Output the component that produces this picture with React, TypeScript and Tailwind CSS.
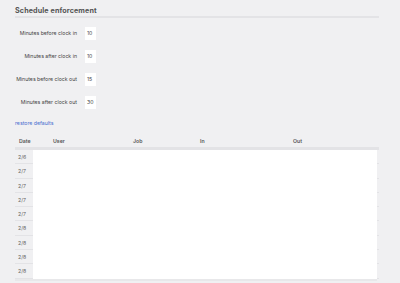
import React from "react";

const rows = [
  { label: "Minutes before clock in", value: "10" },
  { label: "Minutes after clock in", value: "10" },
  { label: "Minutes before clock out", value: "15" },
  { label: "Minutes after clock out", value: "30" },
];

const dates = ["2/6", "2/7", "2/7", "2/7", "2/7", "2/8", "2/8", "2/8", "2/8"];

export default function App() {
  return (
    <div
      className="w-[400px] h-[283px] overflow-hidden bg-[#f0f0f2] pl-[15px] text-[#444]"
      style={{ fontFamily: "Inter, 'Liberation Sans', sans-serif" }}
    >
      <div className="w-[364px] pt-[6px] border-b-2 border-[#e3e3e6]">
        <div className="h-[10px] text-[7.2px] leading-[10px] font-bold text-[#555] tracking-[0.1px]">
          Schedule enforcement
        </div>
      </div>

      <div className="mt-[9px] flex flex-col gap-[10px]">
        {rows.map((r) => (
          <div key={r.label} className="flex items-center h-[13px]">
            <div className="w-[62px] text-right text-[5.2px] leading-[13px] text-[#444] whitespace-nowrap">
              {r.label}
            </div>
            <div className="ml-[8px] w-[11px] h-[13px] bg-white text-[5.2px] leading-[13px] pl-[2px] text-[#444]">
              {r.value}
            </div>
          </div>
        ))}
      </div>

      <div className="mt-[10px] h-[8px] text-[5.2px] leading-[8px] text-[#4a6ed0]">
        restore defaults
      </div>

      <div className="mt-[7px] w-[364px]">
        <div className="flex h-[16px] pt-[2px] items-center border-b-[3px] border-[#e3e3e6] text-[5.2px] font-semibold text-[#555]">
          <div className="w-[38px] pl-[4px]">Date</div>
          <div className="w-[80px]">User</div>
          <div className="w-[67px]">Job</div>
          <div className="w-[93px]">In</div>
          <div className="flex-1">Out</div>
        </div>
        <div className="flex flex-col">
          {dates.map((d, i) => (
            <div key={i} className="flex h-[14.3px]">
              <div className="w-[18px] border-b border-[#e3e3e6] pl-[3px] text-[5.2px] leading-[14px] text-[#666]">
                {d}
              </div>
              <div className="w-[344px] bg-white" />
              <div className="w-[2px] border-b border-[#e3e3e6]" />
            </div>
          ))}
        </div>
        <div className="h-[2px] w-[362px] bg-[#e8e8ea]" />
      </div>
    </div>
  );
}
